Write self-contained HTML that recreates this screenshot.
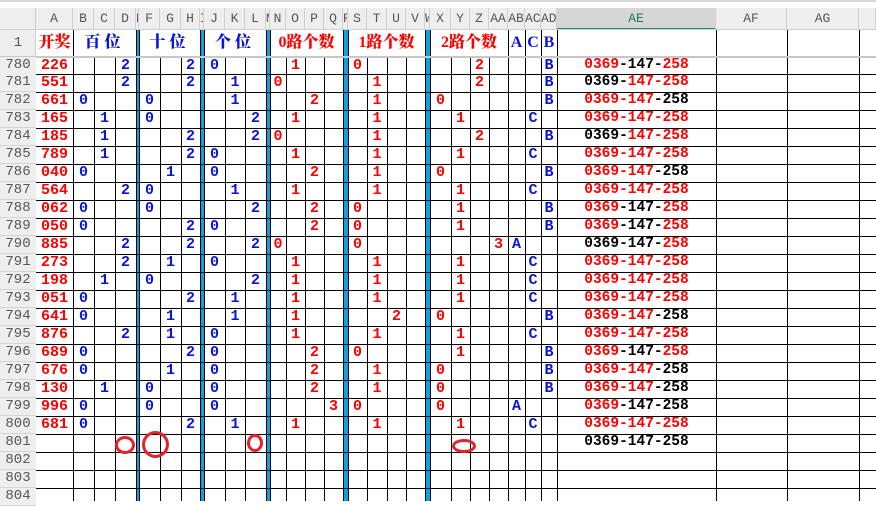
<!DOCTYPE html>
<html><head><meta charset="utf-8"><style>
*{margin:0;padding:0;box-sizing:border-box}
body{width:876px;height:501px;overflow:hidden;background:#fff;position:relative;font-family:"Liberation Mono",monospace}
.v{position:absolute;width:1px;background:#000;bottom:0}
.f{top:30px}.s{top:56px}
.bl{position:absolute;top:30px;bottom:0;background:#0aa2e0}
.h{position:absolute;left:36px;right:0;height:1px;background:#000}
.hd{position:absolute;top:8px;height:22px;line-height:22px;text-align:center;font-size:13px;color:#555;background:#eeeeee;border-right:1px solid #d0d0d0;overflow:hidden;white-space:nowrap}
.r{position:absolute;left:0;width:876px;height:18px}
.r b,.t b{position:absolute;top:0;height:18px;line-height:20px;text-align:center;font:bold 15px "Liberation Mono",monospace;white-space:nowrap;overflow:visible}
.r b.n{left:0;width:36px;font-weight:normal;color:#555;background:#eeeeee;font-size:14px;border-bottom:1px solid #d4d4d4}
.u{color:#0a14d8}.d{color:#f00}
i{font-style:normal}.x{color:#f00}
.A{left:36px;width:37px;color:#f00}
.B{left:73px;width:21px}.C{left:94px;width:21px}.D{left:115px;width:21px}
.F{left:139px;width:21px}.G{left:160px;width:21px}.H{left:181px;width:19px}
.J{left:204px;width:21px}.K{left:225px;width:20px}.L{left:245px;width:21px}
.N{left:270px;width:16px}.O{left:286px;width:19px}.P{left:305px;width:19px}.Q{left:324px;width:19px}
.S{left:348px;width:19px}.T{left:367px;width:20px}.U{left:387px;width:19px}.V{left:406px;width:19px}
.X{left:430px;width:21px}.Y{left:451px;width:19px}.Z{left:470px;width:19px}.AA{left:489px;width:19px}
.AB{left:508px;width:17px}.AC{left:525px;width:16px}.AD{left:541px;width:16px}
.AE{left:557px;width:159px;color:#000;font-size:14.5px!important}
.t{position:absolute;left:0;top:30px;height:26px;width:876px}
.t b{height:26px;line-height:26px;font-family:"Liberation Serif","Noto Serif CJK SC",serif;font-weight:900;font-size:16px}
.c{position:absolute;border:3px solid #e8202a;border-radius:50%}
</style></head><body>
<div style="position:absolute;left:0;top:0;width:876px;height:2px;background:#d8d8d8"></div>
<div style="position:absolute;left:0;top:8px;width:36px;height:22px;background:#eeeeee;border-right:1px solid #d0d0d0"></div>
<div style="position:absolute;left:0;top:30px;width:36px;height:471px;background:#eeeeee;border-right:1px solid #d0d0d0"></div>
<div class="hd" style="left:36px;width:37px">A</div><div class="hd" style="left:73px;width:21px">B</div><div class="hd" style="left:94px;width:21px">C</div><div class="hd" style="left:115px;width:21px">D</div><div class="hd" style="left:136px;width:3px">E</div><div class="hd" style="left:139px;width:21px">F</div><div class="hd" style="left:160px;width:21px">G</div><div class="hd" style="left:181px;width:19px">H</div><div class="hd" style="left:200px;width:4px">I</div><div class="hd" style="left:204px;width:21px">J</div><div class="hd" style="left:225px;width:20px">K</div><div class="hd" style="left:245px;width:21px">L</div><div class="hd" style="left:266px;width:4px">M</div><div class="hd" style="left:270px;width:16px">N</div><div class="hd" style="left:286px;width:19px">O</div><div class="hd" style="left:305px;width:19px">P</div><div class="hd" style="left:324px;width:19px">Q</div><div class="hd" style="left:343px;width:5px">R</div><div class="hd" style="left:348px;width:19px">S</div><div class="hd" style="left:367px;width:20px">T</div><div class="hd" style="left:387px;width:19px">U</div><div class="hd" style="left:406px;width:19px">V</div><div class="hd" style="left:425px;width:5px">W</div><div class="hd" style="left:430px;width:21px">X</div><div class="hd" style="left:451px;width:19px">Y</div><div class="hd" style="left:470px;width:19px">Z</div><div class="hd" style="left:489px;width:19px">AA</div><div class="hd" style="left:508px;width:17px">AB</div><div class="hd" style="left:525px;width:16px">AC</div><div class="hd" style="left:541px;width:16px">AD</div><div class="hd" style="left:557px;width:159px;background:#d6d6d6;color:#1a7a50;border-bottom:2px solid #1f8a5a">AE</div><div class="hd" style="left:716px;width:71px">AF</div><div class="hd" style="left:787px;width:72px">AG</div><div class="hd" style="left:859px;width:17px"></div>
<div style="position:absolute;left:0;top:29px;width:876px;height:1px;background:#d0d0d0"></div>

<div class="bl" style="left:137px;width:2px"></div><div class="bl" style="left:201px;width:3px"></div><div class="bl" style="left:267px;width:3px"></div><div class="bl" style="left:344px;width:4px"></div><div class="bl" style="left:426px;width:4px"></div>
<div class="v f" style="left:73px"></div><div class="v f" style="left:136px"></div><div class="v f" style="left:139px"></div><div class="v f" style="left:200px"></div><div class="v f" style="left:204px"></div><div class="v f" style="left:266px"></div><div class="v f" style="left:270px"></div><div class="v f" style="left:343px"></div><div class="v f" style="left:348px"></div><div class="v f" style="left:425px"></div><div class="v f" style="left:430px"></div><div class="v f" style="left:508px"></div><div class="v f" style="left:525px"></div><div class="v f" style="left:541px"></div><div class="v f" style="left:557px"></div><div class="v f" style="left:716px"></div><div class="v f" style="left:787px"></div><div class="v f" style="left:859px"></div>
<div class="v s" style="left:94px"></div><div class="v s" style="left:115px"></div><div class="v s" style="left:160px"></div><div class="v s" style="left:181px"></div><div class="v s" style="left:225px"></div><div class="v s" style="left:245px"></div><div class="v s" style="left:286px"></div><div class="v s" style="left:305px"></div><div class="v s" style="left:324px"></div><div class="v s" style="left:367px"></div><div class="v s" style="left:387px"></div><div class="v s" style="left:406px"></div><div class="v s" style="left:451px"></div><div class="v s" style="left:470px"></div><div class="v s" style="left:489px"></div>

<div class="h" style="top:74px"></div><div class="h" style="top:92px"></div><div class="h" style="top:110px"></div><div class="h" style="top:128px"></div><div class="h" style="top:146px"></div><div class="h" style="top:164px"></div><div class="h" style="top:182px"></div><div class="h" style="top:200px"></div><div class="h" style="top:218px"></div><div class="h" style="top:236px"></div><div class="h" style="top:254px"></div><div class="h" style="top:272px"></div><div class="h" style="top:290px"></div><div class="h" style="top:308px"></div><div class="h" style="top:326px"></div><div class="h" style="top:344px"></div><div class="h" style="top:362px"></div><div class="h" style="top:380px"></div><div class="h" style="top:398px"></div><div class="h" style="top:416px"></div><div class="h" style="top:434px"></div><div class="h" style="top:452px"></div><div class="h" style="top:470px"></div><div class="h" style="top:488px"></div>
<div style="position:absolute;left:0;top:56px;width:876px;height:2px;background:#c8c8c8"></div>

<div class="t">
<b style="left:0;width:36px;font-family:'Liberation Mono',monospace;font-weight:normal;color:#555;font-size:14px">1</b>
<b class="d" style="left:36px;width:37px">开奖</b>
<b class="u" style="left:73px;width:63px;letter-spacing:4px">百位</b>
<b class="u" style="left:139px;width:61px;letter-spacing:4px">十位</b>
<b class="u" style="left:204px;width:62px;letter-spacing:4px">个位</b>
<b class="d" style="left:270px;width:73px">0路个数</b>
<b class="d" style="left:348px;width:77px">1路个数</b>
<b class="d" style="left:430px;width:78px">2路个数</b>
<b class="u" style="left:508px;width:17px">A</b>
<b class="u" style="left:525px;width:16px">C</b>
<b class="u" style="left:541px;width:16px">B</b>
</div>

<div class="r" style="top:57px"><b class="n">780</b><b class="A">226</b><b class="D u">2</b><b class="H u">2</b><b class="J u">0</b><b class="O d">1</b><b class="S d">0</b><b class="Z d">2</b><b class="AD u">B</b><b class="AE"><i class="x">0369</i>-147-<i class="x">258</i></b></div>
<div class="r" style="top:74px"><b class="n">781</b><b class="A">551</b><b class="D u">2</b><b class="H u">2</b><b class="K u">1</b><b class="N d">0</b><b class="T d">1</b><b class="Z d">2</b><b class="AD u">B</b><b class="AE">0369-<i class="x">147-258</i></b></div>
<div class="r" style="top:92px"><b class="n">782</b><b class="A">661</b><b class="B u">0</b><b class="F u">0</b><b class="K u">1</b><b class="P d">2</b><b class="T d">1</b><b class="X d">0</b><b class="AD u">B</b><b class="AE"><i class="x">0369-147</i>-258</b></div>
<div class="r" style="top:110px"><b class="n">783</b><b class="A">165</b><b class="C u">1</b><b class="F u">0</b><b class="L u">2</b><b class="O d">1</b><b class="T d">1</b><b class="Y d">1</b><b class="AC u">C</b><b class="AE"><i class="x">0369-147-258</i></b></div>
<div class="r" style="top:128px"><b class="n">784</b><b class="A">185</b><b class="C u">1</b><b class="H u">2</b><b class="L u">2</b><b class="N d">0</b><b class="T d">1</b><b class="Z d">2</b><b class="AD u">B</b><b class="AE">0369-<i class="x">147-258</i></b></div>
<div class="r" style="top:146px"><b class="n">785</b><b class="A">789</b><b class="C u">1</b><b class="H u">2</b><b class="J u">0</b><b class="O d">1</b><b class="T d">1</b><b class="Y d">1</b><b class="AC u">C</b><b class="AE"><i class="x">0369-147-258</i></b></div>
<div class="r" style="top:164px"><b class="n">786</b><b class="A">040</b><b class="B u">0</b><b class="G u">1</b><b class="J u">0</b><b class="P d">2</b><b class="T d">1</b><b class="X d">0</b><b class="AD u">B</b><b class="AE"><i class="x">0369-147</i>-258</b></div>
<div class="r" style="top:182px"><b class="n">787</b><b class="A">564</b><b class="D u">2</b><b class="F u">0</b><b class="K u">1</b><b class="O d">1</b><b class="T d">1</b><b class="Y d">1</b><b class="AC u">C</b><b class="AE"><i class="x">0369-147-258</i></b></div>
<div class="r" style="top:200px"><b class="n">788</b><b class="A">062</b><b class="B u">0</b><b class="F u">0</b><b class="L u">2</b><b class="P d">2</b><b class="S d">0</b><b class="Y d">1</b><b class="AD u">B</b><b class="AE"><i class="x">0369</i>-147-<i class="x">258</i></b></div>
<div class="r" style="top:218px"><b class="n">789</b><b class="A">050</b><b class="B u">0</b><b class="H u">2</b><b class="J u">0</b><b class="P d">2</b><b class="S d">0</b><b class="Y d">1</b><b class="AD u">B</b><b class="AE"><i class="x">0369</i>-147-<i class="x">258</i></b></div>
<div class="r" style="top:236px"><b class="n">790</b><b class="A">885</b><b class="D u">2</b><b class="H u">2</b><b class="L u">2</b><b class="N d">0</b><b class="S d">0</b><b class="AA d">3</b><b class="AB u">A</b><b class="AE">0369-147-<i class="x">258</i></b></div>
<div class="r" style="top:254px"><b class="n">791</b><b class="A">273</b><b class="D u">2</b><b class="G u">1</b><b class="J u">0</b><b class="O d">1</b><b class="T d">1</b><b class="Y d">1</b><b class="AC u">C</b><b class="AE"><i class="x">0369-147-258</i></b></div>
<div class="r" style="top:272px"><b class="n">792</b><b class="A">198</b><b class="C u">1</b><b class="F u">0</b><b class="L u">2</b><b class="O d">1</b><b class="T d">1</b><b class="Y d">1</b><b class="AC u">C</b><b class="AE"><i class="x">0369-147-258</i></b></div>
<div class="r" style="top:290px"><b class="n">793</b><b class="A">051</b><b class="B u">0</b><b class="H u">2</b><b class="K u">1</b><b class="O d">1</b><b class="T d">1</b><b class="Y d">1</b><b class="AC u">C</b><b class="AE"><i class="x">0369-147-258</i></b></div>
<div class="r" style="top:308px"><b class="n">794</b><b class="A">641</b><b class="B u">0</b><b class="G u">1</b><b class="K u">1</b><b class="O d">1</b><b class="U d">2</b><b class="X d">0</b><b class="AD u">B</b><b class="AE"><i class="x">0369-147</i>-258</b></div>
<div class="r" style="top:326px"><b class="n">795</b><b class="A">876</b><b class="D u">2</b><b class="G u">1</b><b class="J u">0</b><b class="O d">1</b><b class="T d">1</b><b class="Y d">1</b><b class="AC u">C</b><b class="AE"><i class="x">0369-147-258</i></b></div>
<div class="r" style="top:344px"><b class="n">796</b><b class="A">689</b><b class="B u">0</b><b class="H u">2</b><b class="J u">0</b><b class="P d">2</b><b class="S d">0</b><b class="Y d">1</b><b class="AD u">B</b><b class="AE"><i class="x">0369</i>-147-<i class="x">258</i></b></div>
<div class="r" style="top:362px"><b class="n">797</b><b class="A">676</b><b class="B u">0</b><b class="G u">1</b><b class="J u">0</b><b class="P d">2</b><b class="T d">1</b><b class="X d">0</b><b class="AD u">B</b><b class="AE"><i class="x">0369-147</i>-258</b></div>
<div class="r" style="top:380px"><b class="n">798</b><b class="A">130</b><b class="C u">1</b><b class="F u">0</b><b class="J u">0</b><b class="P d">2</b><b class="T d">1</b><b class="X d">0</b><b class="AD u">B</b><b class="AE"><i class="x">0369-147</i>-258</b></div>
<div class="r" style="top:398px"><b class="n">799</b><b class="A">996</b><b class="B u">0</b><b class="F u">0</b><b class="J u">0</b><b class="Q d">3</b><b class="S d">0</b><b class="X d">0</b><b class="AB u">A</b><b class="AE"><i class="x">0369</i>-147-258</b></div>
<div class="r" style="top:416px"><b class="n">800</b><b class="A">681</b><b class="B u">0</b><b class="H u">2</b><b class="K u">1</b><b class="O d">1</b><b class="T d">1</b><b class="Y d">1</b><b class="AC u">C</b><b class="AE"><i class="x">0369-147-258</i></b></div>
<div class="r" style="top:434px"><b class="n">801</b><b class="AE">0369-147-258</b></div>
<div class="r" style="top:452px"><b class="n">802</b></div>
<div class="r" style="top:470px"><b class="n">803</b></div>
<div class="r" style="top:488px"><b class="n">804</b></div>

<div class="c" style="left:115px;top:436px;width:20px;height:18px"></div>
<div class="c" style="left:142px;top:431px;width:27px;height:27px"></div>
<div class="c" style="left:247px;top:434px;width:16px;height:18px"></div>
<div class="c" style="left:452px;top:439px;width:24px;height:14px"></div>
</body></html>
